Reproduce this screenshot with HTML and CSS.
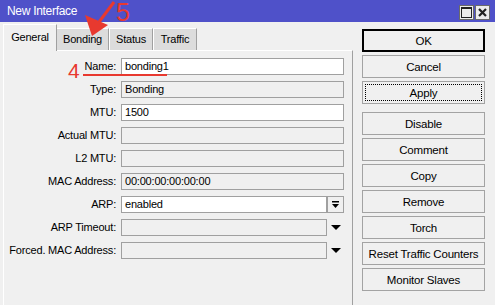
FILE: index.html
```html
<!DOCTYPE html>
<html>
<head>
<meta charset="utf-8">
<link rel="stylesheet" href="styles.css">
</head>
<body>
<div class="window">
  <div class="titlebar">
    <span class="title">New Interface</span>
    <div class="tb-btns">
      <span class="tb-btn"><svg width="11" height="11" viewBox="0 0 11 11"><rect x="0.5" y="0.5" width="10" height="10" fill="none" stroke="#222" stroke-width="1"/><rect x="0" y="0" width="11" height="2" fill="#222"/></svg></span>
      <span class="tb-btn"><svg width="9" height="9" viewBox="0 0 9 9"><path d="M1 1 L8 8 M8 1 L1 8" stroke="#222" stroke-width="2.2"/></svg></span>
    </div>
  </div>
  <div class="main">
    <div class="left">
      <div class="tabs">
        <div class="tab active t-general">General</div>
        <div class="tab t-bonding">Bonding</div>
        <div class="tab t-status">Status</div>
        <div class="tab t-traffic">Traffic</div>
      </div>
      <div class="panel">
        <div class="form">
          <div class="label">Name:</div><div class="field white">bonding1</div>
          <div class="label">Type:</div><div class="field">Bonding</div>
          <div class="label">MTU:</div><div class="field white">1500</div>
          <div class="label">Actual MTU:</div><div class="field"></div>
          <div class="label">L2 MTU:</div><div class="field"></div>
          <div class="label">MAC Address:</div><div class="field">00:00:00:00:00:00</div>
          <div class="label">ARP:</div>
          <div class="combo"><div class="field white grow">enabled</div><span class="dd-btn"><svg width="9" height="8" viewBox="0 0 9 8"><rect x="1" y="0" width="7" height="1.5" fill="#000"/><polygon points="1,3 8,3 4.5,7" fill="#000"/></svg></span></div>
          <div class="label">ARP Timeout:</div>
          <div class="combo"><div class="field grow"></div><span class="dd-arrow"><svg width="10" height="6" viewBox="0 0 10 6"><polygon points="0,0 10,0 5,5" fill="#000"/></svg></span></div>
          <div class="label">Forced. MAC Address:</div>
          <div class="combo"><div class="field grow"></div><span class="dd-arrow"><svg width="10" height="6" viewBox="0 0 10 6"><polygon points="0,0 10,0 5,5" fill="#000"/></svg></span></div>
        </div>
      </div>
    </div>
    <div class="buttons">
      <div class="btn default">OK</div>
      <div class="btn">Cancel</div>
      <div class="btn focused"><span class="focus-ring">Apply</span></div>
      <div class="btn sep">Disable</div>
      <div class="btn">Comment</div>
      <div class="btn">Copy</div>
      <div class="btn">Remove</div>
      <div class="btn">Torch</div>
      <div class="btn">Reset Traffic Counters</div>
      <div class="btn">Monitor Slaves</div>
    </div>
  </div>
  <svg class="annot" width="495" height="305" viewBox="0 0 495 305">
    <path d="M114 2 L99 22" stroke="#e8392f" stroke-width="3" fill="none"/>
    <polygon points="92,36 85,15 108,25" fill="#e8392f"/>
    <rect x="83" y="74" width="84" height="2" fill="#e8392f"/>
  </svg>
  <span class="num num5">5</span>
  <span class="num num4">4</span>
</div>
</body>
</html>
```

FILE: styles.css
```css
html, body {
  margin: 0;
  padding: 0;
}
body {
  background: #f0f0f0;
  font-family: "Liberation Sans", Arial, sans-serif;
  font-size: 11px;
  letter-spacing: -0.2px;
  color: #000;
}
.window {
  position: relative;
  width: 495px;
  height: 305px;
  overflow: hidden;
  background: #f0f0f0;
}
.titlebar {
  height: 22px;
  background: #4f51c9;
  display: flex;
  align-items: center;
  justify-content: space-between;
  padding: 0 5px 0 7px;
  box-sizing: border-box;
}
.title {
  color: #fff;
  font-size: 12px;
  letter-spacing: -0.3px;
}
.tb-btns {
  display: flex;
  gap: 1px;
  margin-top: 2px;
}
.tb-btn {
  width: 15px;
  height: 15px;
  box-sizing: border-box;
  background: #ececec;
  border: 1px solid #6a6a6a;
  display: flex;
  align-items: center;
  justify-content: center;
}
.main {
  display: flex;
  height: 283px;
}
.left {
  width: 350px;
  margin-left: 3px;
  display: flex;
  flex-direction: column;
}
.tabs {
  height: 28px;
  display: flex;
  align-items: flex-end;
}
.tab {
  height: 22px;
  box-sizing: border-box;
  background: #dcdcdc;
  border-top: 1px solid #fff;
  border-left: 1px solid #fff;
  border-right: 1px solid #a0a0a0;
  display: flex;
  align-items: center;
  justify-content: center;
  padding-bottom: 1px;
}
.tab.active {
  height: 27px;
  margin-bottom: -1px;
  background: #f0f0f0;
  position: relative;
  z-index: 1;
  padding-bottom: 3px;
}
.t-general { width: 54px; }
.t-bonding { width: 52px; border-left: none; }
.t-status { width: 44px; }
.t-traffic { width: 44px; }
.panel {
  flex: 1;
  box-sizing: border-box;
  border-top: 1px solid #fff;
  border-left: 1px solid #fff;
  border-right: 1px solid #a0a0a0;
  padding-top: 7px;
}
.form {
  display: grid;
  grid-template-columns: 112px 223px;
  grid-auto-rows: 17px;
  column-gap: 5px;
  row-gap: 6px;
}
.label {
  text-align: right;
  line-height: 17px;
  white-space: nowrap;
}
.field {
  height: 17px;
  box-sizing: border-box;
  border: 1px solid #a0a0a0;
  line-height: 15px;
  padding-left: 3px;
  background: #f0f0f0;
  white-space: nowrap;
  overflow: hidden;
}
.field.white {
  background: #fff;
}
.combo {
  display: flex;
  align-items: center;
}
.grow {
  width: 206px;
  flex: none;
}
.dd-btn {
  width: 17px;
  height: 17px;
  box-sizing: border-box;
  margin-left: 0;
  border: 1px solid #a0a0a0;
  display: flex;
  align-items: center;
  justify-content: center;
}
.dd-arrow {
  width: 17px;
  height: 17px;
  display: flex;
  align-items: center;
  justify-content: center;
  padding-left: 1px;
}
.buttons {
  width: 123px;
  margin-left: 9px;
  padding-top: 7px;
  display: flex;
  flex-direction: column;
  gap: 3px;
}
.btn {
  height: 23px;
  box-sizing: border-box;
  border: 1px solid #a3a3a3;
  background: #f0f0f0;
  display: flex;
  align-items: center;
  justify-content: center;
  white-space: nowrap;
  font-size: 11.5px;
}
.btn.default {
  border: 2px solid #000;
}
.btn.focused {
  padding: 2px;
}
.focus-ring {
  flex: 1;
  align-self: stretch;
  border: 1px dotted #000;
  display: flex;
  align-items: center;
  justify-content: center;
}
.btn.sep {
  margin-top: 5px;
}
.annot {
  position: absolute;
  left: 0;
  top: 0;
  pointer-events: none;
}
.num {
  position: absolute;
  color: #e8392f;
  font-family: "Liberation Sans", Arial, sans-serif;
  letter-spacing: 0;
  line-height: 1;
}
.num5 {
  left: 116px;
  top: 0px;
  font-size: 25px;
}
.num4 {
  left: 68px;
  top: 60px;
  font-size: 21px;
}
```
